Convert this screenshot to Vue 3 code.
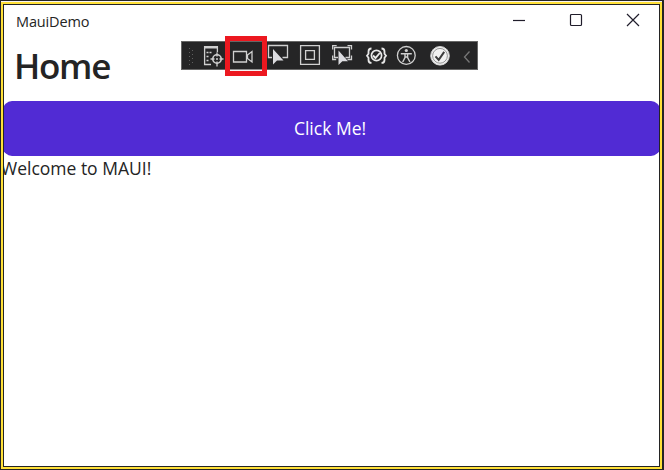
<script setup>
</script>

<template>
  <div class="frame">
    <div class="edge">
      <main class="window">
        <header class="titlebar">
          <span class="app-name">MauiDemo</span>
          <svg class="controls" width="130" height="16" viewBox="0 0 130 16" fill="none" stroke="#201d2b" stroke-width="1.2">
            <path d="M1 8.5h12" />
            <rect x="58.5" y="2.5" width="11" height="11" rx="1" />
            <path d="M115 2l12 12M127 2L115 14" />
          </svg>
        </header>
        <h1>Home</h1>
        <button class="click"><span>Click Me!</span></button>
        <p>Welcome to MAUI!</p>

        <div class="toolbar">
          <svg width="295" height="27" viewBox="182 42 295 27" fill="none" stroke="#d0d0d0" stroke-width="1.3">
            <g fill="#606060" stroke="none">
              <path d="M189 48h1v1h-1zM189 52h1v1h-1zM189 56h1v1h-1zM189 60h1v1h-1zM189 64h1v1h-1zM192 50h1v1h-1zM192 54h1v1h-1zM192 58h1v1h-1zM192 62h1v1h-1z" />
            </g>
            <path d="M211 64.5h-6.4V46.6h12.8v5.6" />
            <path d="M204.6 47.3h12.8" stroke-width="2.4" />
            <path d="M206.5 52.5h6M206.5 56.5h3M206.5 60.5h3" stroke-dasharray="2 1" />
            <circle cx="217" cy="59" r="4.2" stroke-width="1.6" />
            <circle cx="217" cy="59" r="1" fill="#d0d0d0" stroke="none" />
            <path d="M217 52.5v4M217 61.5v5M210.5 59h4M219.5 59h4" />
            <path d="M233.5 51.5h13v10.5h-13zM247.5 55l4.5-3.5v10.5l-4.5-3.5z" />
            <path d="M230 70.5h32" stroke="#f5f5f5" stroke-width="1.6" />
            <path d="M272 57.5h-3.5v-12h19v12h-5" />
            <path d="M273 49v15.5l4-4h6.5z" fill="#dcdce0" stroke="none" />
            <path d="M300.6 45.6h18.8v18.8h-18.8zM305.6 50.6h8.8v8.8h-8.8z" />
            <path d="M338 57.5h-3.5v-10h15v10h-4" />
            <path d="M332.7 49.5v-3.8h4M347.5 45.7h4v3.8M332.7 55.5v4h3.5M347.5 59.5h4v-4" />
            <path d="M338.5 50.5v14.5l3.8-3.8h5.7z" fill="#dcdce0" stroke="none" />
            <g stroke="#e8e8e8">
              <path d="M371.5 48.5q-3 0-3 3v2.2l-1.5 2 1.5 2v2.2q0 3 3 3M381.5 48.5q3 0 3 3v2.2l1.5 2-1.5 2v2.2q0 3-3 3" stroke-width="1.8" />
              <circle cx="376.5" cy="55.5" r="5.1" stroke-width="1.7" />
              <path d="M373 55.5l2.5 2.5 4.3-5" stroke-width="1.9" />
            </g>
            <circle cx="406.3" cy="55.4" r="8.9" />
            <circle cx="406.3" cy="50.5" r="1.6" fill="#d0d0d0" stroke="none" />
            <path d="M400.8 53.8h11M405 54v3.5l-2.3 4.5M407.6 54v3.5l2.3 4.5M405 57h2.6" stroke-width="1.4" />
            <circle cx="440" cy="55.8" r="9.3" fill="#f1f1f1" stroke="#d2d2d2" stroke-width="1" />
            <circle cx="440" cy="55.8" r="7.4" stroke="#888" stroke-width=".9" />
            <path d="M435.5 56.3l3.2 3.6 5.5-8" stroke="#3c3c3c" stroke-width="2" />
            <path d="M469.5 51.5l-5 5.5 5 5.5" stroke="#777" />
          </svg>
          <div class="highlight"></div>
        </div>
      </main>
    </div>
  </div>
</template>

<style>
body {
  margin: 0;
}
</style>

<style scoped>
.frame {
  box-sizing: border-box;
  width: 664px;
  height: 470px;
  padding: 2px 2px 1px 1px;
  background: #242424;
  font-family: "Open Sans", "Noto Sans", sans-serif;
  color: #242424;
}
.edge {
  box-sizing: border-box;
  height: 467px;
  border: 2px solid #ffe038;
  box-shadow: 0 -1px 0 #f4f2f6;
  padding: 1px;
  background: #242424;
}
.window {
  position: relative;
  height: 461px;
  overflow: hidden;
  background: #fff;
}
.titlebar {
  display: flex;
  justify-content: space-between;
  height: 32px;
}
.app-name {
  padding: 7px 0 0 12px;
  font-size: 14.5px;
  line-height: 20px;
  letter-spacing: -0.15px;
}
.controls {
  margin: 7px 17px 0 0;
}
h1 {
  height: 64px;
  margin: 0;
  padding-left: 10px;
  font-size: 35px;
  font-weight: 600;
  line-height: 58px;
  letter-spacing: -1.3px;
}
.click {
  display: block;
  width: 657px;
  height: 55px;
  margin: 0 -1px;
  padding: 0 3px 2px 0;
  border: 0;
  border-radius: 9px;
  background: #512bd4;
  color: #fff;
  font: 17.5px "Open Sans", sans-serif;
}
p {
  margin: 0 0 0 -3px;
  font-size: 17.5px;
  line-height: 25px;
}
.toolbar {
  position: absolute;
  left: 177px;
  top: 36px;
  width: 295px;
  height: 27px;
  border: 1px solid #666;
  background: #252526;
}
.toolbar svg {
  display: block;
  overflow: visible;
}
.highlight {
  position: absolute;
  box-sizing: border-box;
  left: 43px;
  top: -6px;
  width: 42px;
  height: 40px;
  border: 5px solid #ec1820;
}
</style>
